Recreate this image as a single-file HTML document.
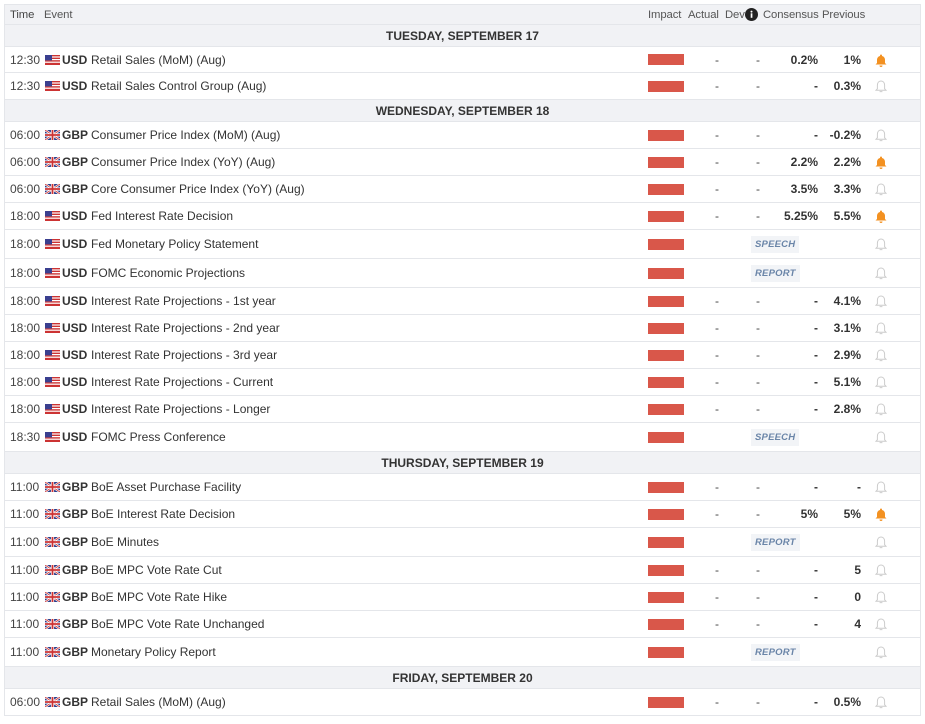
<!DOCTYPE html>
<html><head><meta charset="utf-8"><style>
*{margin:0;padding:0;box-sizing:border-box}
body{width:925px;height:724px;background:#fff;font-family:"Liberation Sans",sans-serif;font-size:12px;color:#333;position:relative;overflow:hidden}
.r{position:absolute;left:4px;width:917px;border-bottom:1px solid #e4e6ea;background:#fff;border-left:1px solid #e4e6ea;border-right:1px solid #e4e6ea}
.r>*{position:absolute;top:0;height:100%;display:flex;align-items:center}
.hd{background:#f1f2f5;color:#555;border-top:1px solid #e4e6ea;font-size:11.3px;letter-spacing:-.1px}
.dh{background:#f1f2f5;justify-content:center;font-weight:bold;color:#333}
.dh span{position:static;width:100%;justify-content:center;display:flex;align-items:center;height:100%}
.t{left:5px;color:#444}.f{left:40px}.c{left:57px;font-weight:bold;color:#333}.e{left:86px;color:#333}
.i{left:643px}.i b{display:block;width:36px;height:11px;background:#d9574a}
.a{left:706px;width:12px;justify-content:center;color:#444}
.d{left:747px;width:12px;justify-content:center;color:#444}
.cs{right:102px;font-weight:bold}.pv{right:59px;font-weight:bold}
.bl{left:869px}
.bg{left:746px}.bg i{display:block;background:#f2f4f7;color:#6a85a8;font-size:9.5px;font-weight:bold;padding:3px 4px;letter-spacing:.2px}
</style></head><body>
<svg width="0" height="0" style="position:absolute"><defs>
<symbol id="us" viewBox="0 0 15 10"><rect width="15" height="10" fill="#c33"/><g fill="#fff"><rect y="1.4" width="15" height="1.2"/><rect y="4" width="15" height="1.2"/><rect y="6.6" width="15" height="1.2"/></g><rect width="7" height="5.4" fill="#3a3f8f"/></symbol>
<symbol id="gb" viewBox="0 0 15 10"><rect width="15" height="10" fill="#2a3c8a"/><path d="M0 0L15 10M15 0L0 10" stroke="#fff" stroke-width="2.2"/><path d="M0 0L15 10M15 0L0 10" stroke="#c33" stroke-width=".8"/><path d="M7.5 0V10M0 5H15" stroke="#fff" stroke-width="3.2"/><path d="M7.5 0V10M0 5H15" stroke="#c33" stroke-width="1.8"/></symbol>
<symbol id="bo" viewBox="0 0 14 14"><path d="M7 1.5a1 1 0 0 1 1 1v.5c2 .5 3 2 3 4v3l1.5 1.5H1.5L3 10V7c0-2 1-3.5 3-4V2.5a1 1 0 0 1 1-1zM5.5 12.5h3a1.5 1.5 0 0 1-3 0z" fill="#f39121"/></symbol>
<symbol id="bw" viewBox="0 0 14 14"><path d="M7 2c2.2 0 3.6 1.8 3.6 4.3v3.4l1.4 1.6H2l1.4-1.6V6.3C3.4 3.8 4.8 2 7 2zM5.6 12.6h2.8" fill="none" stroke="#ccc" stroke-width="1"/></symbol>
</defs></svg>

<div class="r hd" style="top:4px;height:21px"><span class="t">Time</span><span style="left:39px">Event</span><span style="left:643px">Impact</span><span style="left:683px">Actual</span><span style="left:720px">Dev</span><span style="left:740px"><svg width="13" height="13" viewBox="0 0 13 13"><circle cx="6.5" cy="6.5" r="6.5" fill="#222"/><rect x="5.7" y="5.3" width="1.7" height="4.5" fill="#fff"/><circle cx="6.5" cy="3.6" r="1" fill="#fff"/></svg></span><span style="left:758px">Consensus</span><span style="left:817px">Previous</span></div>

<div class="r dh" style="top:25px;height:22px"><span>TUESDAY, SEPTEMBER 17</span></div>
<div class="r" style="top:47px;height:26px"><span class="t">12:30</span><span class="f"><svg width="15" height="10"><use href="#us"/></svg></span><span class="c">USD</span><span class="e">Retail Sales (MoM) (Aug)</span><span class="i"><b></b></span><span class="a">-</span><span class="d">-</span><span class="cs">0.2%</span><span class="pv">1%</span><span class="bl"><svg width="14" height="14"><use href="#bo"/></svg></span></div>
<div class="r" style="top:73px;height:27px"><span class="t">12:30</span><span class="f"><svg width="15" height="10"><use href="#us"/></svg></span><span class="c">USD</span><span class="e">Retail Sales Control Group (Aug)</span><span class="i"><b></b></span><span class="a">-</span><span class="d">-</span><span class="cs">-</span><span class="pv">0.3%</span><span class="bl"><svg width="14" height="14"><use href="#bw"/></svg></span></div>

<div class="r dh" style="top:100px;height:22px"><span>WEDNESDAY, SEPTEMBER 18</span></div>
<div class="r" style="top:122px;height:27px"><span class="t">06:00</span><span class="f"><svg width="15" height="10"><use href="#gb"/></svg></span><span class="c">GBP</span><span class="e">Consumer Price Index (MoM) (Aug)</span><span class="i"><b></b></span><span class="a">-</span><span class="d">-</span><span class="cs">-</span><span class="pv">-0.2%</span><span class="bl"><svg width="14" height="14"><use href="#bw"/></svg></span></div>
<div class="r" style="top:149px;height:27px"><span class="t">06:00</span><span class="f"><svg width="15" height="10"><use href="#gb"/></svg></span><span class="c">GBP</span><span class="e">Consumer Price Index (YoY) (Aug)</span><span class="i"><b></b></span><span class="a">-</span><span class="d">-</span><span class="cs">2.2%</span><span class="pv">2.2%</span><span class="bl"><svg width="14" height="14"><use href="#bo"/></svg></span></div>
<div class="r" style="top:176px;height:27px"><span class="t">06:00</span><span class="f"><svg width="15" height="10"><use href="#gb"/></svg></span><span class="c">GBP</span><span class="e">Core Consumer Price Index (YoY) (Aug)</span><span class="i"><b></b></span><span class="a">-</span><span class="d">-</span><span class="cs">3.5%</span><span class="pv">3.3%</span><span class="bl"><svg width="14" height="14"><use href="#bw"/></svg></span></div>
<div class="r" style="top:203px;height:27px"><span class="t">18:00</span><span class="f"><svg width="15" height="10"><use href="#us"/></svg></span><span class="c">USD</span><span class="e">Fed Interest Rate Decision</span><span class="i"><b></b></span><span class="a">-</span><span class="d">-</span><span class="cs">5.25%</span><span class="pv">5.5%</span><span class="bl"><svg width="14" height="14"><use href="#bo"/></svg></span></div>
<div class="r" style="top:230px;height:29px"><span class="t">18:00</span><span class="f"><svg width="15" height="10"><use href="#us"/></svg></span><span class="c">USD</span><span class="e">Fed Monetary Policy Statement</span><span class="i"><b></b></span><span class="bg"><i>SPEECH</i></span><span class="bl"><svg width="14" height="14"><use href="#bw"/></svg></span></div>
<div class="r" style="top:259px;height:29px"><span class="t">18:00</span><span class="f"><svg width="15" height="10"><use href="#us"/></svg></span><span class="c">USD</span><span class="e">FOMC Economic Projections</span><span class="i"><b></b></span><span class="bg"><i>REPORT</i></span><span class="bl"><svg width="14" height="14"><use href="#bw"/></svg></span></div>
<div class="r" style="top:288px;height:27px"><span class="t">18:00</span><span class="f"><svg width="15" height="10"><use href="#us"/></svg></span><span class="c">USD</span><span class="e">Interest Rate Projections - 1st year</span><span class="i"><b></b></span><span class="a">-</span><span class="d">-</span><span class="cs">-</span><span class="pv">4.1%</span><span class="bl"><svg width="14" height="14"><use href="#bw"/></svg></span></div>
<div class="r" style="top:315px;height:27px"><span class="t">18:00</span><span class="f"><svg width="15" height="10"><use href="#us"/></svg></span><span class="c">USD</span><span class="e">Interest Rate Projections - 2nd year</span><span class="i"><b></b></span><span class="a">-</span><span class="d">-</span><span class="cs">-</span><span class="pv">3.1%</span><span class="bl"><svg width="14" height="14"><use href="#bw"/></svg></span></div>
<div class="r" style="top:342px;height:27px"><span class="t">18:00</span><span class="f"><svg width="15" height="10"><use href="#us"/></svg></span><span class="c">USD</span><span class="e">Interest Rate Projections - 3rd year</span><span class="i"><b></b></span><span class="a">-</span><span class="d">-</span><span class="cs">-</span><span class="pv">2.9%</span><span class="bl"><svg width="14" height="14"><use href="#bw"/></svg></span></div>
<div class="r" style="top:369px;height:27px"><span class="t">18:00</span><span class="f"><svg width="15" height="10"><use href="#us"/></svg></span><span class="c">USD</span><span class="e">Interest Rate Projections - Current</span><span class="i"><b></b></span><span class="a">-</span><span class="d">-</span><span class="cs">-</span><span class="pv">5.1%</span><span class="bl"><svg width="14" height="14"><use href="#bw"/></svg></span></div>
<div class="r" style="top:396px;height:27px"><span class="t">18:00</span><span class="f"><svg width="15" height="10"><use href="#us"/></svg></span><span class="c">USD</span><span class="e">Interest Rate Projections - Longer</span><span class="i"><b></b></span><span class="a">-</span><span class="d">-</span><span class="cs">-</span><span class="pv">2.8%</span><span class="bl"><svg width="14" height="14"><use href="#bw"/></svg></span></div>
<div class="r" style="top:423px;height:29px"><span class="t">18:30</span><span class="f"><svg width="15" height="10"><use href="#us"/></svg></span><span class="c">USD</span><span class="e">FOMC Press Conference</span><span class="i"><b></b></span><span class="bg"><i>SPEECH</i></span><span class="bl"><svg width="14" height="14"><use href="#bw"/></svg></span></div>

<div class="r dh" style="top:452px;height:22px"><span>THURSDAY, SEPTEMBER 19</span></div>
<div class="r" style="top:474px;height:27px"><span class="t">11:00</span><span class="f"><svg width="15" height="10"><use href="#gb"/></svg></span><span class="c">GBP</span><span class="e">BoE Asset Purchase Facility</span><span class="i"><b></b></span><span class="a">-</span><span class="d">-</span><span class="cs">-</span><span class="pv">-</span><span class="bl"><svg width="14" height="14"><use href="#bw"/></svg></span></div>
<div class="r" style="top:501px;height:27px"><span class="t">11:00</span><span class="f"><svg width="15" height="10"><use href="#gb"/></svg></span><span class="c">GBP</span><span class="e">BoE Interest Rate Decision</span><span class="i"><b></b></span><span class="a">-</span><span class="d">-</span><span class="cs">5%</span><span class="pv">5%</span><span class="bl"><svg width="14" height="14"><use href="#bo"/></svg></span></div>
<div class="r" style="top:528px;height:29px"><span class="t">11:00</span><span class="f"><svg width="15" height="10"><use href="#gb"/></svg></span><span class="c">GBP</span><span class="e">BoE Minutes</span><span class="i"><b></b></span><span class="bg"><i>REPORT</i></span><span class="bl"><svg width="14" height="14"><use href="#bw"/></svg></span></div>
<div class="r" style="top:557px;height:27px"><span class="t">11:00</span><span class="f"><svg width="15" height="10"><use href="#gb"/></svg></span><span class="c">GBP</span><span class="e">BoE MPC Vote Rate Cut</span><span class="i"><b></b></span><span class="a">-</span><span class="d">-</span><span class="cs">-</span><span class="pv">5</span><span class="bl"><svg width="14" height="14"><use href="#bw"/></svg></span></div>
<div class="r" style="top:584px;height:27px"><span class="t">11:00</span><span class="f"><svg width="15" height="10"><use href="#gb"/></svg></span><span class="c">GBP</span><span class="e">BoE MPC Vote Rate Hike</span><span class="i"><b></b></span><span class="a">-</span><span class="d">-</span><span class="cs">-</span><span class="pv">0</span><span class="bl"><svg width="14" height="14"><use href="#bw"/></svg></span></div>
<div class="r" style="top:611px;height:27px"><span class="t">11:00</span><span class="f"><svg width="15" height="10"><use href="#gb"/></svg></span><span class="c">GBP</span><span class="e">BoE MPC Vote Rate Unchanged</span><span class="i"><b></b></span><span class="a">-</span><span class="d">-</span><span class="cs">-</span><span class="pv">4</span><span class="bl"><svg width="14" height="14"><use href="#bw"/></svg></span></div>
<div class="r" style="top:638px;height:29px"><span class="t">11:00</span><span class="f"><svg width="15" height="10"><use href="#gb"/></svg></span><span class="c">GBP</span><span class="e">Monetary Policy Report</span><span class="i"><b></b></span><span class="bg"><i>REPORT</i></span><span class="bl"><svg width="14" height="14"><use href="#bw"/></svg></span></div>

<div class="r dh" style="top:667px;height:22px"><span>FRIDAY, SEPTEMBER 20</span></div>
<div class="r" style="top:689px;height:27px"><span class="t">06:00</span><span class="f"><svg width="15" height="10"><use href="#gb"/></svg></span><span class="c">GBP</span><span class="e">Retail Sales (MoM) (Aug)</span><span class="i"><b></b></span><span class="a">-</span><span class="d">-</span><span class="cs">-</span><span class="pv">0.5%</span><span class="bl"><svg width="14" height="14"><use href="#bw"/></svg></span></div>
</body></html>
